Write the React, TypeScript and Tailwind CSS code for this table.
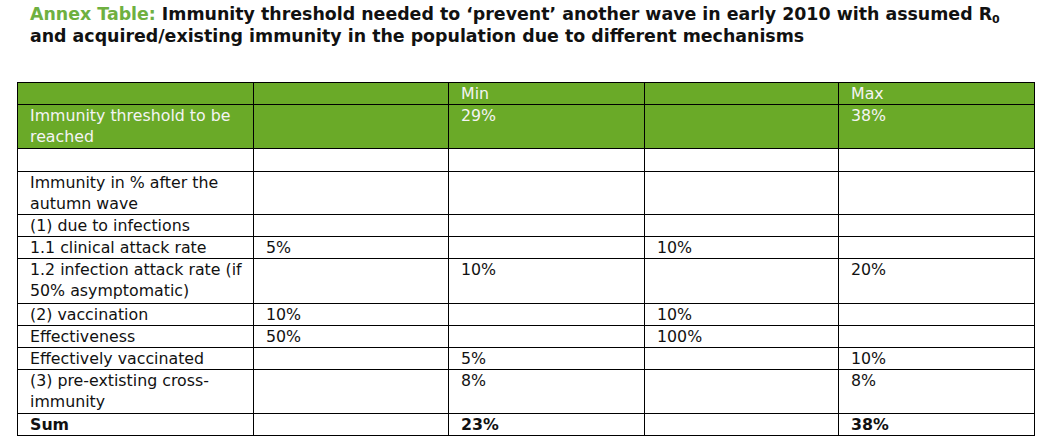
const rows: { label: string; cells: string[]; h: string; bold?: boolean }[] = [
  { label: "", cells: ["", "", "", ""], h: "h-[23px]" },
  { label: "Immunity in % after the autumn wave", cells: ["", "", "", ""], h: "h-[43px]" },
  { label: "(1) due to infections", cells: ["", "", "", ""], h: "h-[21px]" },
  { label: "1.1 clinical attack rate", cells: ["5%", "", "10%", ""], h: "h-[22px]" },
  { label: "1.2 infection attack rate (if 50% asymptomatic)", cells: ["", "10%", "", "20%"], h: "h-[45px]" },
  { label: "(2) vaccination", cells: ["10%", "", "10%", ""], h: "h-[22px]" },
  { label: "Effectiveness", cells: ["50%", "", "100%", ""], h: "h-[22px]" },
  { label: "Effectively vaccinated", cells: ["", "5%", "", "10%"], h: "h-[22px]" },
  { label: "(3) pre-extisting cross-immunity", cells: ["", "8%", "", "8%"], h: "h-[44px]" },
  { label: "Sum", cells: ["", "23%", "", "38%"], h: "h-[22px]", bold: true },
];

const cell = "border border-black pl-[12px] pr-[2px] py-0 align-top text-left";

export default function App() {
  return (
    <div className="w-[1046px] h-[442px] bg-white overflow-hidden font-['DejaVu_Sans',Verdana,sans-serif] text-[#111]">
      {/* Caption */}
      <div className="pl-[30px] pt-[3px] text-[17.4px] leading-[22px] font-bold">
        <span className="text-[#6fb040]">Annex Table: </span>
        Immunity threshold needed to ‘prevent’ another wave in early 2010 with assumed R
        <sub className="text-[11px] leading-none align-baseline relative top-[3px]">0</sub>
        <br />
        and acquired/existing immunity in the population due to different mechanisms
      </div>

      {/* Table */}
      <table className="ml-[17px] mt-[35px] border-collapse table-fixed w-[1017px] text-[15.8px] leading-[21px]">
        <colgroup>
          <col className="w-[236px]" />
          <col className="w-[195px]" />
          <col className="w-[196px]" />
          <col className="w-[194px]" />
          <col className="w-[196px]" />
        </colgroup>
        <thead className="bg-[#6aaa28] text-[#f4f4f4]">
          <tr className="h-[22px]">
            <th className={`${cell} font-normal`}></th>
            <th className={`${cell} font-normal`}></th>
            <th className={`${cell} font-normal`}>Min</th>
            <th className={`${cell} font-normal`}></th>
            <th className={`${cell} font-normal`}>Max</th>
          </tr>
          <tr className="h-[44px]">
            <th className={`${cell} font-normal`}>Immunity threshold to be reached</th>
            <th className={`${cell} font-normal`}></th>
            <th className={`${cell} font-normal`}>29%</th>
            <th className={`${cell} font-normal`}></th>
            <th className={`${cell} font-normal`}>38%</th>
          </tr>
        </thead>
        <tbody>
          {rows.map((r, i) => (
            <tr key={i} className={r.h}>
              <td className={`${cell} ${r.bold ? "font-bold" : "font-normal"}`}>{r.label}</td>
              {r.cells.map((c, j) => (
                <td key={j} className={`${cell} ${r.bold ? "font-bold" : "font-normal"}`}>
                  {c}
                </td>
              ))}
            </tr>
          ))}
        </tbody>
      </table>
    </div>
  );
}
